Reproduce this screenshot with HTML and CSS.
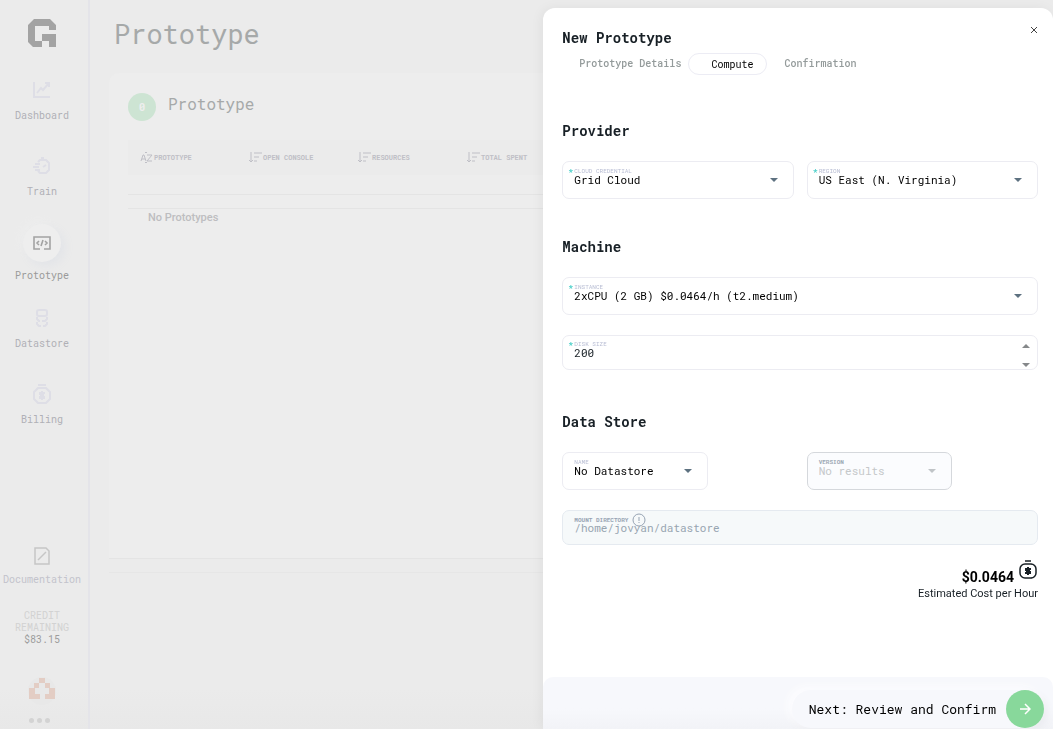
FILE: index.html
```html
<!DOCTYPE html>
<html lang="en">
<head>
<meta charset="utf-8">
<meta name="viewport" content="width=device-width, initial-scale=1">
<title>New Prototype</title>
<link rel="stylesheet" href="styles.css">
</head>
<body>
<div class="app">
  <nav class="sidebar" aria-label="Main">
    <svg class="logo" viewBox="0 0 28 28" aria-hidden="true"><path fill="#a3a3a3" d="M6 0H22L28 6V11H21V7H7V22H14V15H28V28H21V22H14V28H5L0 23V6Z"/></svg>
    <a class="nav-item" href="#">
      <span class="nav-icon"><svg width="18" height="18" viewBox="0 0 18 18"><path d="M1 1V16H17M4 12L8 7L10 9L16 2M12 2H16V6"/></svg></span>
      <span>Dashboard</span>
    </a>
    <a class="nav-item" href="#">
      <span class="nav-icon"><svg width="18" height="18" viewBox="0 0 18 18"><path d="M8 1H11M5 5L7 3H13L16 6V13L13 16H7L5 14M2 7H7M0 10H6M2 13H7M10 10L13 8"/></svg></span>
      <span>Train</span>
    </a>
    <a class="nav-item nav-item--active" href="#" aria-current="page">
      <span class="nav-icon"><svg width="18" height="14" viewBox="0 0 18 14"><path d="M7 13H1V1H17V13H11M6 5L4 7L6 9M12 5L14 7L12 9M10 4L8 10"/></svg></span>
      <span>Prototype</span>
    </a>
    <a class="nav-item" href="#">
      <span class="nav-icon"><svg width="14" height="18" viewBox="0 0 14 18"><rect x="2" y="1" width="10" height="6" rx="2"/><path d="M2 8V10L4 12H5M7 12H10L12 10V8M2 13V15L4 17H6M8 17H10L12 15V13"/></svg></span>
      <span>Datastore</span>
    </a>
    <a class="nav-item" href="#">
      <span class="nav-icon"><svg width="18" height="20" viewBox="0 0 18 20"><path d="M5 1H13M5 4H13L17 8V15L13 19H5L1 15V8Z"/><path fill="currentColor" stroke="none" d="M8 7H10V8H12V10H11V12H12V15H10V16H8V15H6V12H7V11H6V8H8Z"/></svg></span>
      <span>Billing</span>
    </a>
    <div class="sidebar-foot">
      <a class="doc-link" href="#">
        <svg width="16" height="18" viewBox="0 0 16 18"><path d="M1 1H12L15 4V17H1ZM4 13L12 5"/></svg>
        <span>Documentation</span>
      </a>
      <div class="credit">CREDIT<br>REMAINING<strong>$83.15</strong></div>
      <svg class="avatar" width="28" height="28" viewBox="0 0 28 28" aria-hidden="true"><circle cx="14" cy="14" r="14" fill="#e8e8e8"/><path fill="#e3cdc4" d="M11 1H17V6H22V11H27V22H17V17H21V11H17V6H11V11H7V17H12V22H1V11H6V6H11Z"/></svg>
      <button class="more" aria-label="More"><i></i><i></i><i></i></button>
    </div>
  </nav>
  <main class="page">
    <h1 class="page-title">Prototype</h1>
    <section class="card">
      <header class="card-head"><span class="badge">0</span><h2>Prototype</h2></header>
      <table class="list">
        <colgroup><col class="col"><col class="col"><col class="col"><col class="col"><col></colgroup>
        <thead><tr>
          <th><span class="sort"><svg width="13" height="13" viewBox="0 0 13 13"><path d="M1 10L3 4H4L6 10M2 8H5M7 4H12L7 10H12M5 2L6 1L7 2M5 11L6 12L7 11"/></svg>PROTOTYPE</span></th>
          <th><span class="sort"><svg width="13" height="13" viewBox="0 0 13 13"><path d="M2 1V11M0 9L2 11L4 9M5 2H13M5 6H10M5 10H8"/></svg>OPEN CONSOLE</span></th>
          <th><span class="sort"><svg width="13" height="13" viewBox="0 0 13 13"><path d="M2 1V11M0 9L2 11L4 9M5 2H13M5 6H10M5 10H8"/></svg>RESOURCES</span></th>
          <th><span class="sort"><svg width="13" height="13" viewBox="0 0 13 13"><path d="M2 1V11M0 9L2 11L4 9M5 2H13M5 6H10M5 10H8"/></svg>TOTAL SPENT</span></th>
          <th></th>
        </tr></thead>
      </table>
      <div class="scroll-strip"></div>
      <p class="empty">No Prototypes</p>
    </section>
    <div class="card-strip"></div>
  </main>
</div>

<aside class="drawer" role="dialog" aria-labelledby="drawer-title">
  <form class="drawer-body">
    <header class="drawer-head">
      <h2 id="drawer-title">New Prototype</h2>
      <button type="button" class="close" aria-label="Close"><svg width="8" height="8" viewBox="0 0 8 8"><path d="M1 1L7 7M7 1L1 7"/></svg></button>
    </header>
    <div class="steps">
      <button type="button" class="step">Prototype Details</button>
      <button type="button" class="step step--active">Compute</button>
      <button type="button" class="step">Confirmation</button>
    </div>

    <section class="group">
      <h3>Provider</h3>
      <div class="pair">
        <div class="field">
          <label for="cred"><span class="star">*</span>CLOUD CREDENTIAL</label>
          <select id="cred"><option>Grid Cloud</option></select><i class="caret"></i>
        </div>
        <div class="field">
          <label for="region"><span class="star">*</span>REGION</label>
          <select id="region"><option>US East (N. Virginia)</option></select><i class="caret"></i>
        </div>
      </div>
    </section>

    <section class="group group--tall">
      <h3>Machine</h3>
      <div class="field">
        <label for="instance"><span class="star">*</span>INSTANCE</label>
        <select id="instance"><option>2xCPU (2 GB) $0.0464/h (t2.medium)</option></select><i class="caret"></i>
      </div>
      <div class="field field--input">
        <label for="disk"><span class="star">*</span>DISK SIZE</label>
        <input id="disk" type="number" value="200">
        <div class="stepper">
          <button type="button" aria-label="Increase"><i class="caret caret--up"></i></button>
          <button type="button" aria-label="Decrease"><i class="caret caret--down"></i></button>
        </div>
      </div>
    </section>

    <section class="group">
      <h3>Data Store</h3>
      <div class="pair pair--narrow">
        <div class="field">
          <label for="store"><span class="star"></span>NAME</label>
          <select id="store"><option>No Datastore</option></select><i class="caret"></i>
        </div>
        <div class="field field--disabled">
          <label for="version"><span class="star"></span>VERSION</label>
          <select id="version" disabled><option>No results</option></select><i class="caret"></i>
        </div>
      </div>
      <div class="field field--input field--readonly">
        <label for="mount"><span class="star"></span>MOUNT DIRECTORY<svg class="info" width="14" height="14" viewBox="0 0 14 14"><circle cx="7" cy="7" r="6"/><path d="M7 4V8M7 9V10"/></svg></label>
        <input id="mount" type="text" value="/home/jovyan/datastore" disabled>
      </div>
    </section>

    <div class="cost">
      <div class="cost-row"><strong>$0.0464</strong><svg width="20" height="20" viewBox="0 0 20 20"><path d="M7 1H13"/><rect x="2" y="4" width="16" height="14" rx="5"/><path fill="currentColor" stroke="none" d="M9 7H11V8H13V10H12V11H13V14H11V15H9V14H7V12H8V11H7V8H9Z"/></svg></div>
      <span>Estimated Cost per Hour</span>
    </div>
  </form>
  <footer class="drawer-foot">
    <button type="button" class="next"><span>Next: Review and Confirm</span><span class="next-icon"><svg width="12" height="12" viewBox="0 0 12 12"><path d="M1 6H11M6 1L11 6L6 11"/></svg></span></button>
  </footer>
</aside>
</body>
</html>
```

FILE: styles.css
```css
* { box-sizing: border-box; }

:root {
  --mono: "Roboto Mono", "DejaVu Sans Mono", monospace;
  --sans: Roboto, "Liberation Sans", sans-serif;
}

body {
  margin: 0;
  background: #ebebeb;
  font-family: var(--mono);
  overflow: hidden;
}

h1, h2, h3, p { margin: 0; }
a { color: inherit; text-decoration: none; }
svg { fill: none; stroke: currentColor; flex: none; display: block; }
button {
  margin: 0;
  padding: 0;
  border: 0;
  background: none;
  color: inherit;
  font-family: inherit;
  cursor: pointer;
}

/* Page behind the drawer */
.app {
  display: flex;
  height: 100vh;
  background: linear-gradient(to top, #e8e8e8, #ebebeb 40px);
}

.sidebar {
  flex: 0 0 90px;
  display: flex;
  flex-direction: column;
  align-items: center;
  padding: 19px 4px 6px 0;
  border-right: 2px solid #e4e4e9;
  font-size: 10px;
  line-height: 12px;
  color: #b0b0b6;
}
.logo { width: 28px; height: 28px; margin-bottom: 15px; stroke: none; }

.nav-item {
  display: flex;
  flex-direction: column;
  align-items: center;
  gap: 7px;
  padding: 15px 0 16px;
}
.nav-icon {
  display: flex;
  align-items: center;
  justify-content: center;
  height: 26px;
  color: #dedee6;
}
.nav-icon svg { stroke-width: 2; }
.nav-item--active { gap: 8px; padding: 10px 0 8px; color: #9a9a9a; }
.nav-item--active .nav-icon {
  width: 38px;
  height: 38px;
  border-radius: 50%;
  background: #eeeeee;
  box-shadow: 4px 4px 10px #e2e4e8, -4px -4px 10px #ededed;
  color: #a3a3a3;
}
.nav-item--active .nav-icon svg { stroke-width: 1.6; }

.sidebar-foot {
  margin-top: auto;
  display: flex;
  flex-direction: column;
  align-items: center;
}
.doc-link { display: flex; flex-direction: column; align-items: center; gap: 9px; color: #c3c3cb; }
.doc-link svg { stroke: #c6c6c6; stroke-width: 1.5; }
.credit { margin: 24px 0 31px; text-align: center; color: #d2d2d2; }
.credit strong { display: block; font-weight: 400; color: #9d9d9d; }
.avatar { stroke: none; }
.more { display: flex; gap: 3px; padding: 13px 4px 0 0; }
.more i { width: 5px; height: 5px; border-radius: 50%; background: #d3d3d3; }

.page { flex: 1; min-width: 0; display: flex; flex-direction: column; padding: 16px 18px 156px 19px; }
.page-title {
  margin: 0 0 21px 5px;
  font-size: 27px;
  line-height: 36px;
  font-weight: 400;
  color: #a6a9a9;
}
.card {
  flex: 1;
  padding: 20px 19px;
  border-bottom: 1px solid #e4e4e4;
  border-radius: 10px 10px 0 0;
  background: #ededed;
}
.card-head { display: flex; gap: 12px; }
.card-head h2 { font-size: 16px; line-height: 22px; font-weight: 400; color: #a6a9a9; }
.badge {
  width: 28px;
  height: 28px;
  border-radius: 50%;
  background: #cde4d3;
  color: #eeeeee;
  font-size: 11px;
  line-height: 28px;
  font-weight: 700;
  text-align: center;
}
.list {
  width: 100%;
  margin-top: 19px;
  table-layout: fixed;
  border-collapse: collapse;
  background: #ebebeb;
}
.col { width: 109px; }
.list th { height: 35px; padding: 0 0 0 12px; font-size: 7px; line-height: 12px; color: #bfbfc6; text-align: left; white-space: nowrap; }
.sort { display: flex; align-items: center; gap: 1px; }
.scroll-strip { height: 15px; margin-top: 19px; border: solid #e4e4e4; border-width: 1px 0; }
.empty { padding: 2px 20px; font-family: var(--sans); font-size: 11px; line-height: 13px; font-weight: 500; color: #bdbdc0; }
.card-strip { height: 14px; border-bottom: 1px solid #e6e6e6; }

/* Drawer */
.drawer {
  position: fixed;
  top: 8px;
  right: 0;
  bottom: 0;
  width: 48.4vw;
  display: flex;
  flex-direction: column;
  border-radius: 12px 12px 0 0;
  background: #ffffff;
  box-shadow: -2px 0 12px rgba(0, 0, 0, 0.05);
}
.drawer-body { flex: 1; min-height: 0; padding: 20px 15px 0 19px; }
.drawer h2, .drawer h3 { font-size: 14px; line-height: 20px; font-weight: 700; color: #182026; }
.drawer-head { display: flex; justify-content: space-between; }
.close { align-self: flex-start; padding: 0 0 4px; margin-top: -2px; color: #444444; }

.steps { display: flex; align-items: center; margin: 5px 0 46px 15px; }
.step {
  height: 22px;
  padding: 0 8px 0 17px;
  font-size: 10px;
  line-height: 22px;
  font-weight: 500;
  color: #949b9b;
}
.step:first-child { padding: 0 7px 0 2px; }
.step--active {
  padding: 0 13px 0 22px;
  border: 1px solid #ececf4;
  border-radius: 11px;
  font-weight: 400;
  color: #000000;
}

.group { display: grid; gap: 20px; }
.group + .group { margin-top: 38px; }
.group--tall + .group { margin-top: 42px; }
.pair { display: grid; grid-template-columns: 1fr 1fr; gap: 13px; }
.pair--narrow .field { width: 63%; }

.field {
  display: grid;
  grid-template-columns: 1fr auto;
  grid-template-rows: 6px 12px;
  min-height: 38px;
  padding: 6px 15px 0 5px;
  border: 1px solid #ececf2;
  border-radius: 7px;
  color: #000000;
}
.field label {
  grid-column: 1 / -1;
  display: flex;
  align-items: center;
  font-size: 6px;
  line-height: 6px;
  color: #b9bed4;
  white-space: nowrap;
}
.star { width: 6px; font-size: 8px; font-weight: 700; color: #3accc5; }
.field select, .field input {
  appearance: none;
  width: 100%;
  min-width: 0;
  height: 12px;
  margin: 0;
  padding: 0 0 0 6px;
  border: 0;
  border-radius: 0;
  outline: 0;
  background: transparent;
  color: inherit;
  font-family: inherit;
  font-size: 11px;
  line-height: 12px;
  opacity: 1;
}
.caret {
  align-self: center;
  border: solid transparent;
  border-width: 4px 4px 0;
  border-top-color: #5d7180;
}
.field--disabled { border-color: #d5d8dc; background: #fbfcfe; color: #c5c8ca; }
.field--disabled label { color: #9ca8b4; font-weight: 700; }
.field--disabled .caret { border-top-color: #c0c4c7; }

.field--input { grid-template-rows: 6px 12px auto; min-height: 35px; padding-top: 5px; padding-right: 7px; color: #182026; }
.field--input label { grid-column: 1; }
.field--input input { appearance: textfield; }
.field input::-webkit-inner-spin-button { appearance: none; margin: 0; }
.stepper { grid-column: 2; grid-row: 1 / 4; display: grid; gap: 10px; padding-top: 1px; }
.stepper button { display: flex; align-items: center; height: 8px; }
.caret--down { border-top-color: #85888a; }
.caret--up { border-width: 0 4px 4px; border-bottom-color: #85888a; }
.field--readonly { border-color: #e5eaf0; background: #f6f9fa; color: #98a5b1; }
.field--readonly label { padding-top: 1px; color: #96a3b3; font-weight: 700; }
.field--readonly input { grid-column: 1 / -1; }
.info { margin-left: 4px; stroke: #96a3b3; }

.cost {
  display: flex;
  flex-direction: column;
  align-items: flex-end;
  margin-top: 15px;
  font-family: var(--sans);
  font-size: 11px;
  line-height: 14px;
  color: #182026;
}
.cost-row { display: flex; gap: 4px; height: 27px; }
.cost-row strong { padding-top: 7px; font-size: 14px; line-height: 20px; font-weight: 700; color: #000000; }
.cost-row svg { stroke-width: 1.5; }

.drawer-foot {
  display: flex;
  justify-content: flex-end;
  padding: 13px 9px 1px;
  border-radius: 10px 10px 0 0;
  background: linear-gradient(#f7f8fc 60%, #f2f3f7);
  overflow: hidden;
}
.next {
  display: flex;
  align-items: center;
  gap: 10px;
  height: 38px;
  padding-left: 17px;
  border-radius: 19px;
  background: #f7f8fc;
  box-shadow: -4px -3px 8px #fdfdff, 3px 4px 8px #eaebf0;
  color: #000000;
  font-size: 13px;
}
.next-icon {
  display: flex;
  align-items: center;
  justify-content: center;
  width: 38px;
  height: 38px;
  border-radius: 50%;
  background: #88d89b;
  color: #ffffff;
}
.next-icon svg { stroke-width: 1.5; }
```
